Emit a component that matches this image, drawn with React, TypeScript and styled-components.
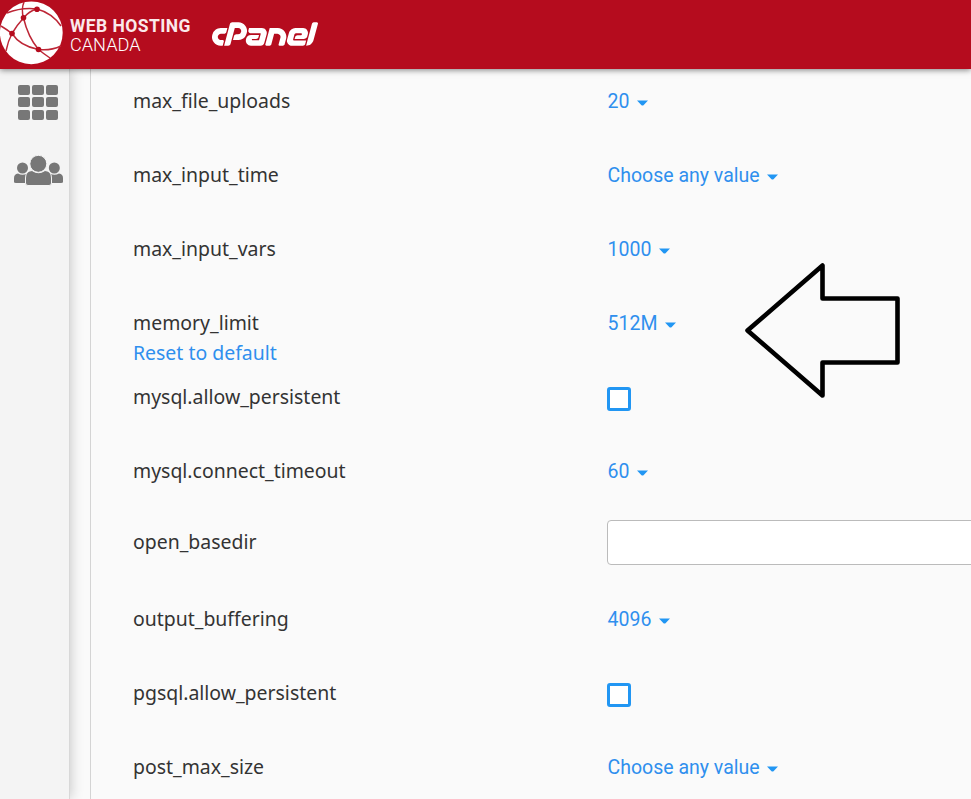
import React from "react";
import styled, { createGlobalStyle } from "styled-components";
import { SiCpanel } from "react-icons/si";

const GlobalStyle = createGlobalStyle`
  * { box-sizing: border-box; }
  body { margin: 0; background: #fafafa; overflow: hidden; }
`;

const Page = styled.div`
  position: relative;
  display: flex;
  flex-direction: column;
  width: 100%;
  height: 100vh;
  overflow: hidden;
  font-family: "Noto Sans", sans-serif;
  font-size: 19.45px;
  line-height: 30px;
  color: #333;
`;

const Header = styled.header`
  position: relative;
  z-index: 2;
  display: flex;
  flex: none;
  height: 69px;
  background: #b50c1e;
  box-shadow: 0 1px 6px rgba(0, 0, 0, 0.5);
`;

const Globe = styled.svg`
  flex: none;
  width: 66px;
  height: 68px;
`;

const BrandName = styled.div`
  display: flex;
  flex-direction: column;
  width: 124px;
  margin-left: 3px;
  padding-top: 16px;
  color: #fff;
`;

const BrandLine = styled.svg`
  display: block;
  flex: none;
  width: 124px;
  height: 19px;
  overflow: visible;
  font-family: Roboto, sans-serif;
`;

const CpanelMark = styled(SiCpanel)`
  width: 106px;
  height: 106px;
  margin: -19px 0 0 19px;
  color: #fff;
`;

const Body = styled.div`
  display: flex;
  flex: 1;
  min-height: 0;
`;

const Sidebar = styled.nav`
  display: flex;
  flex: none;
  flex-direction: column;
  width: 70px;
  background: #f4f4f4;
  border-right: 1px solid #d8d8d8;
  box-shadow: 1px 0 12px rgba(0, 0, 0, 0.2);
`;

const GridIcon = styled.div`
  display: grid;
  grid-template-columns: repeat(3, 12px);
  grid-auto-rows: 10px;
  gap: 2.4px 2px;
  margin: 16px 0 0 18.4px;
`;

const GridCell = styled.span`
  border-radius: 2px;
  background: #777;
`;

const UsersIcon = styled.svg`
  flex: none;
  width: 50px;
  height: 31px;
  margin: 35px 0 0 13px;
`;

const Panel = styled.main`
  flex: 1;
  min-width: 0;
  margin-left: 20px;
  padding: 7px 0 0 42px;
  border-left: 1px solid #d4d4d4;
  background: #fafafa;
`;

const Row = styled.div<{ $field?: boolean }>`
  display: grid;
  grid-template-columns: 474px 1fr;
  align-items: ${(p) => (p.$field ? "center" : "start")};
  height: 74px;
  padding: ${(p) => (p.$field ? "0 0 29px" : "10px 0 0")};
`;

const Label = styled.div<{ $field?: boolean }>`
  display: flex;
  flex-direction: column;
  align-items: flex-start;
  padding-bottom: ${(p) => (p.$field ? "1px" : "0")};
`;

const Reset = styled.a`
  color: #2f8fee;
`;

const Value = styled.div`
  display: flex;
  align-items: center;
  height: 31px;
  padding: 1px 0 0 0.5px;
  color: #2f8fee;
  font-family: Roboto, sans-serif;
  font-size: 19.5px;
`;

const Caret = styled.svg`
  width: 11px;
  height: 6px;
  margin: 2px 0 0 7.5px;
  fill: #2196f3;
`;

const Checkbox = styled.span`
  width: 24px;
  height: 24px;
  margin-top: 5px;
  border: 3px solid #2196f3;
  border-radius: 3px;
  background: #fff;
`;

const Field = styled.input`
  width: 420px;
  height: 45px;
  border: 1px solid #bbb;
  border-radius: 4px;
  background: #fff;
`;

const Arrow = styled.svg`
  position: absolute;
  z-index: 3;
  left: 740px;
  top: 258px;
  width: 166px;
  height: 146px;
`;

type Option = {
  name: string;
  kind: "select" | "checkbox" | "text";
  value?: string;
  reset?: boolean;
};

const options: Option[] = [
  { name: "max_file_uploads", kind: "select", value: "20" },
  { name: "max_input_time", kind: "select", value: "Choose any value" },
  { name: "max_input_vars", kind: "select", value: "1000" },
  { name: "memory_limit", kind: "select", value: "512M", reset: true },
  { name: "mysql.allow_persistent", kind: "checkbox" },
  { name: "mysql.connect_timeout", kind: "select", value: "60" },
  { name: "open_basedir", kind: "text" },
  { name: "output_buffering", kind: "select", value: "4096" },
  { name: "pgsql.allow_persistent", kind: "checkbox" },
  { name: "post_max_size", kind: "select", value: "Choose any value" },
];

function Control({ option }: { option: Option }) {
  if (option.kind === "checkbox") return <Checkbox role="checkbox" aria-checked={false} />;
  if (option.kind === "text") return <Field aria-label={option.name} />;
  return (
    <Value>
      {option.value}
      <Caret viewBox="0 0 11 6">
        <path d="M0 0.500H11L6.500 5.200Q5.500 6 4.500 5.200Z" />
      </Caret>
    </Value>
  );
}

export default function App() {
  return (
    <Page>
      <GlobalStyle />
      <Header>
        <Globe viewBox="0 0 66 68">
          <circle cx="31.3" cy="32.8" r="31.4" fill="#fff" />
          <g fill="none" stroke="#bd2636" strokeWidth="1.5">
            <path d="M7 13Q22 7 37 9Q52 13 61 26" />
            <path d="M24 2Q21 9 23.5 18Q28 37 38.5 49.5Q44 54 50 58" />
            <path d="M37 9Q29 11 23.5 18Q17 25 12 33.5Q8 41 6 51" />
            <path d="M1 26Q6 29 12 33.5Q20 46 38.5 49.5Q50 51 61 46" />
          </g>
          <g fill="#b50c1e">
            <circle cx="37" cy="9.3" r="2.8" />
            <circle cx="23.5" cy="17.8" r="2.8" />
            <circle cx="12" cy="33.5" r="2.8" />
            <circle cx="38.5" cy="49.5" r="2.8" />
          </g>
        </Globe>
        <BrandName>
          <BrandLine>
            <text x="1" y="16" fontSize="17.5" fontWeight="700" fill="#fbe9eb" textLength="120.500">WEB HOSTING</text>
          </BrandLine>
          <BrandLine>
            <text x="1" y="16" fontSize="17.5" fontWeight="300" fill="#fff" textLength="70.500" lengthAdjust="spacingAndGlyphs">CANADA</text>
          </BrandLine>
        </BrandName>
        <CpanelMark aria-label="cPanel" />
      </Header>
      <Body>
        <Sidebar>
          <GridIcon>
            {Array.from({ length: 9 }, (_, i) => (
              <GridCell key={i} />
            ))}
          </GridIcon>
          <UsersIcon viewBox="0 0 50 31" fill="#777">
            <circle cx="9.5" cy="13" r="5.5" />
            <circle cx="41.3" cy="13" r="5.5" />
            <path d="M1 27V23Q1 19 5 18.5Q9.500 21 14 18.500V27Q14 28 12 28H3Q1 28 1 27Z" />
            <path d="M50 27V23Q50 19 46 18.500Q41.500 21 37 18.500V27Q37 28 39 28H48Q50 28 50 27Z" />
            <path d="M12.500 28V23Q12.500 16 19 15.500Q25.500 20 32 15.500Q38.500 16 38.500 23V28Q38.500 30.500 36 30.500H15Q12.500 30.500 12.500 28Z" stroke="#f4f4f4" />
            <circle cx="25.300" cy="8.800" r="8.500" stroke="#f4f4f4" />
          </UsersIcon>
        </Sidebar>
        <Panel>
          {options.map((option) => (
            <Row key={option.name} $field={option.kind === "text"}>
              <Label $field={option.kind === "text"}>
                <span>{option.name}</span>
                {option.reset && <Reset>Reset to default</Reset>}
              </Label>
              <Control option={option} />
            </Row>
          ))}
        </Panel>
      </Body>
      <Arrow viewBox="740 258 166 146">
        <path
          d="M747.500 330.500L822.500 265.500V298.500H897.500V362.500H822.500V395.500Z"
          fill="none"
          stroke="#000"
          strokeWidth="4.600"
          strokeLinejoin="round"
        />
      </Arrow>
    </Page>
  );
}
